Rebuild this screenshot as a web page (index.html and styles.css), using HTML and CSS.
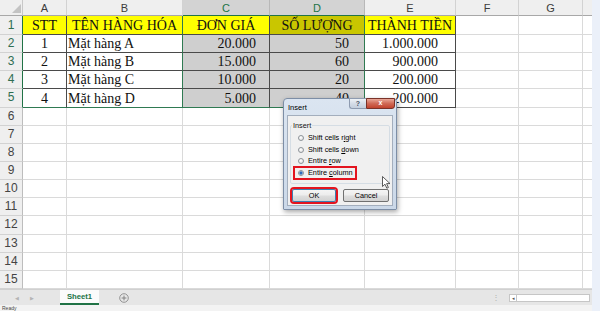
FILE: index.html
```html
<!DOCTYPE html>
<html lang="vi">
<head>
<meta charset="utf-8">
<title>Insert</title>
<link rel="stylesheet" href="styles.css">
</head>
<body>
<div class="app">
  <div class="main">
    <div class="sheet">
      <div class="c corner"><svg width="10" height="10" viewBox="0 0 10 10"><polygon points="10,1 10,10 1,10" fill="#c3c3c3"/></svg></div>
      <div class="c ch">A</div>
      <div class="c ch">B</div>
      <div class="c ch on">C</div>
      <div class="c ch on">D</div>
      <div class="c ch">E</div>
      <div class="c ch">F</div>
      <div class="c ch">G</div>
      <div class="c ch hx"></div>

      <div class="c rh on">1</div>
      <div class="c t y ctr">STT</div>
      <div class="c t y ctr gr">TÊN HÀNG HÓA</div>
      <div class="c t y ctr">ĐƠN GIÁ</div>
      <div class="c t yo ctr gr">SỐ LƯỢNG</div>
      <div class="c t y ctr">THÀNH TIỀN</div>
      <div class="c"></div><div class="c"></div><div class="c hx"></div>

      <div class="c rh on">2</div>
      <div class="c t ctr">1</div>
      <div class="c t l gr">Mặt hàng A</div>
      <div class="c t g r pc">20.000</div>
      <div class="c t g r pd gr">50</div>
      <div class="c t r pe">1.000.000</div>
      <div class="c"></div><div class="c"></div><div class="c hx"></div>

      <div class="c rh on">3</div>
      <div class="c t ctr">2</div>
      <div class="c t l gr">Mặt hàng B</div>
      <div class="c t g r pc">15.000</div>
      <div class="c t g r pd gr">60</div>
      <div class="c t r pe">900.000</div>
      <div class="c"></div><div class="c"></div><div class="c hx"></div>

      <div class="c rh on">4</div>
      <div class="c t ctr">3</div>
      <div class="c t l gr">Mặt hàng C</div>
      <div class="c t g r pc">10.000</div>
      <div class="c t g r pd gr">20</div>
      <div class="c t r pe">200.000</div>
      <div class="c"></div><div class="c"></div><div class="c hx"></div>

      <div class="c rh on">5</div>
      <div class="c t ctr gb">4</div>
      <div class="c t l gr gb">Mặt hàng D</div>
      <div class="c t g r pc gb">5.000</div>
      <div class="c t g r pd gr gb">40</div>
      <div class="c t r pe">200.000</div>
      <div class="c"></div><div class="c"></div><div class="c hx"></div>

      <div class="c rh">6</div><div class="c"></div><div class="c"></div><div class="c"></div><div class="c"></div><div class="c"></div><div class="c"></div><div class="c"></div><div class="c hx"></div>
      <div class="c rh">7</div><div class="c"></div><div class="c"></div><div class="c"></div><div class="c"></div><div class="c"></div><div class="c"></div><div class="c"></div><div class="c hx"></div>
      <div class="c rh">8</div><div class="c"></div><div class="c"></div><div class="c"></div><div class="c"></div><div class="c"></div><div class="c"></div><div class="c"></div><div class="c hx"></div>
      <div class="c rh">9</div><div class="c"></div><div class="c"></div><div class="c"></div><div class="c"></div><div class="c"></div><div class="c"></div><div class="c"></div><div class="c hx"></div>
      <div class="c rh">10</div><div class="c"></div><div class="c"></div><div class="c"></div><div class="c"></div><div class="c"></div><div class="c"></div><div class="c"></div><div class="c hx"></div>
      <div class="c rh">11</div><div class="c"></div><div class="c"></div><div class="c"></div><div class="c"></div><div class="c"></div><div class="c"></div><div class="c"></div><div class="c hx"></div>
      <div class="c rh">12</div><div class="c"></div><div class="c"></div><div class="c"></div><div class="c"></div><div class="c"></div><div class="c"></div><div class="c"></div><div class="c hx"></div>
      <div class="c rh">13</div><div class="c"></div><div class="c"></div><div class="c"></div><div class="c"></div><div class="c"></div><div class="c"></div><div class="c"></div><div class="c hx"></div>
      <div class="c rh">14</div><div class="c"></div><div class="c"></div><div class="c"></div><div class="c"></div><div class="c"></div><div class="c"></div><div class="c"></div><div class="c hx"></div>
      <div class="c rh">15</div><div class="c"></div><div class="c"></div><div class="c"></div><div class="c"></div><div class="c"></div><div class="c"></div><div class="c"></div><div class="c hx"></div>
    </div>

    <div class="tabbar">
      <div class="nav"><span class="arr">&#9664;</span><span class="arr">&#9654;</span></div>
      <div class="tab">Sheet1</div>
      <div class="add"><svg width="10" height="10" viewBox="0 0 10 10"><circle cx="5" cy="5" r="4.3" fill="none" stroke="#8a8a8a" stroke-width="0.9"/><path d="M5 2.6V7.4M2.6 5H7.4" stroke="#7a7a7a" stroke-width="0.9"/></svg></div>
      <div class="spacer"></div>
      <div class="split">&#8942;</div>
      <div class="hscroll"><span class="sbtn">&#9666;</span><span class="track"></span></div>
    </div>
    <div class="status">Ready</div>
  </div>
  <div class="strip"></div>

  <div class="dlg">
    <div class="dlg-title">
      <span class="ttl">Insert</span>
      <div class="tbtns"><span class="help">?</span><span class="close">x</span></div>
    </div>
    <div class="dlg-body">
      <fieldset class="grp">
        <legend>Insert</legend>
        <div class="opt"><span class="lab"><span class="radio"></span><span class="txt">Shift cells r<u>i</u>ght</span></span></div>
        <div class="opt"><span class="lab"><span class="radio"></span><span class="txt">Shift cells <u>d</u>own</span></span></div>
        <div class="opt"><span class="lab"><span class="radio"></span><span class="txt">Entire <u>r</u>ow</span></span></div>
        <div class="opt"><span class="lab hl"><span class="radio on"></span><span class="txt">Entire <u>c</u>olumn</span></span></div>
      </fieldset>
      <div class="btns">
        <button class="btn ok">OK</button>
        <button class="btn cancel">Cancel</button>
      </div>
    </div>
  </div>

  <svg class="cursor" width="9" height="13" viewBox="0 0 9 13"><path d="M0.5 0.5V10.5L3 8.2L4.8 12.2L6.4 11.5L4.6 7.6H8Z" fill="#fff" stroke="#333" stroke-width="0.8" stroke-linejoin="round"/></svg>
</div>
</body>
</html>
```

FILE: styles.css
```css
html, body {
  margin: 0;
  padding: 0;
  width: 600px;
  height: 311px;
  overflow: hidden;
  background: #fff;
}

.app {
  position: relative;
  display: flex;
  width: 600px;
  height: 311px;
}

.main {
  width: 592px;
  display: flex;
  flex-direction: column;
}

.strip {
  width: 8px;
  background: #ebf0f9;
}

.sheet {
  display: grid;
  grid-template-columns: 23px 44px 116px 87px 95px 91px 63px 64px 9px;
  grid-template-rows: 16px 19px repeat(14, 18.143px);
  height: 289px;
  overflow: hidden;
}

.c {
  box-sizing: border-box;
  border-right: 1px solid #dadada;
  border-bottom: 1px solid #dadada;
  display: flex;
  align-items: flex-end;
  overflow: hidden;
  white-space: nowrap;
  font-family: "Liberation Serif", "Times New Roman", serif;
  font-size: 14px;
  line-height: 16px;
  color: #111;
  background: #fff;
}

.hx {
  border-right: none;
}

.corner {
  background: #efefef;
  border-right: 1px solid #c8c8c8;
  border-bottom: 1px solid #a8a8a8;
  align-items: flex-end;
  justify-content: flex-end;
  padding: 0 1px 2px 0;
}

.ch {
  background: #efefef;
  border-bottom: 1px solid #a8a8a8;
  border-right-color: #d2d2d2;
  justify-content: center;
  align-items: center;
  font-family: "Liberation Sans", Arial, sans-serif;
  font-size: 11px;
  line-height: 12px;
  color: #3c3c3c;
}

.ch.on {
  background: #d3d3d3;
  color: #217346;
  border-bottom: 1px solid #217346;
  border-right-color: #b8b8b8;
}

.rh {
  background: #efefef;
  border-right: 1px solid #bdbdbd;
  border-bottom-color: #d2d2d2;
  justify-content: center;
  align-items: center;
  font-family: "Liberation Sans", Arial, sans-serif;
  font-size: 12px;
  line-height: 13px;
  color: #444;
}

.rh.on {
  color: #2e6e52;
  border-right-color: #217346;
}

.t {
  border-right-color: #4a4a4a;
  border-bottom-color: #4a4a4a;
}

.y { background: #ffff00; }
.yo { background: #c9c600; }
.g { background: #cfcfcf; }

.ctr { justify-content: center; }
.l { justify-content: flex-start; padding-left: 1px; }
.r { justify-content: flex-end; }
.pc { padding-right: 13px; }
.pd { padding-right: 15px; }
.pe { padding-right: 17px; }

.gr { border-right-color: #2f7a52; }
.gb { border-bottom-color: #2f7a52; }

/* sheet tabs */
.tabbar {
  box-sizing: border-box;
  height: 16px;
  background: #e6e6e6;
  border-top: 1px solid #d0d0d0;
  display: flex;
  align-items: flex-start;
  font-family: "Liberation Sans", Arial, sans-serif;
}

.nav {
  width: 60px;
  display: flex;
  align-items: center;
  height: 15px;
  padding-left: 15px;
  box-sizing: border-box;
  gap: 11px;
}

.arr {
  font-size: 5px;
  color: #b4b4b4;
  line-height: 6px;
}

.tab {
  box-sizing: border-box;
  width: 39px;
  height: 15px;
  background: #fbfbfb;
  border-bottom: 2px solid #217346;
  color: #217346;
  font-weight: bold;
  font-size: 7.7px;
  line-height: 13px;
  text-align: center;
}

.add {
  margin-left: 20px;
  height: 15px;
  display: flex;
  align-items: center;
}

.spacer { flex: 1; }

.split {
  font-size: 8px;
  color: #b0b0b0;
  line-height: 15px;
  margin-right: 9px;
}

.hscroll {
  display: flex;
  align-items: center;
  height: 15px;
  margin-right: 2px;
}

.sbtn {
  box-sizing: border-box;
  width: 8px;
  height: 8px;
  border: 1px solid #c6c6c6;
  background: #fff;
  font-size: 5px;
  line-height: 6px;
  color: #555;
  text-align: center;
}

.track {
  box-sizing: border-box;
  width: 73px;
  height: 8px;
  border: 1px solid #c6c6c6;
  border-left: none;
  background: #fff;
}

.status {
  height: 6px;
  background: #f3f3f3;
  overflow: hidden;
  font-family: "Liberation Sans", Arial, sans-serif;
  font-size: 5px;
  line-height: 6px;
  padding-left: 2px;
  box-sizing: border-box;
  color: #444;
}

/* dialog */
.dlg {
  position: absolute;
  left: 283px;
  top: 98px;
  width: 114px;
  height: 112px;
  box-sizing: border-box;
  border: 1px solid #7d8ea6;
  border-radius: 4px 4px 1px 1px;
  background: linear-gradient(#dbe5f1, #cbd8e8);
  box-shadow: 1px 2px 5px rgba(0, 0, 0, 0.35);
  padding: 0 3px 3px;
  display: flex;
  flex-direction: column;
  font-family: "Liberation Sans", Arial, sans-serif;
  color: #111;
}

.dlg-title {
  height: 16px;
  display: flex;
  align-items: flex-start;
}

.ttl {
  flex: 1;
  font-size: 7.5px;
  line-height: 8px;
  padding: 5px 0 0 1px;
  color: #000;
}

.tbtns {
  display: flex;
  margin-top: -1px;
  margin-right: -2px;
  height: 11px;
}

.help {
  box-sizing: border-box;
  width: 17px;
  height: 11px;
  border: 1px solid #8e9bb0;
  border-right: none;
  border-radius: 0 0 0 3px;
  background: linear-gradient(#eef2f7, #d3dbe6 55%, #c4cfdd);
  font-size: 7px;
  font-weight: bold;
  line-height: 9px;
  text-align: center;
  color: #4a5566;
}

.close {
  box-sizing: border-box;
  width: 29px;
  height: 11px;
  border: 1px solid #7a3228;
  border-radius: 0 0 3px 0;
  background: linear-gradient(#e9a797, #d06a56 50%, #c2432d);
  font-size: 7px;
  font-weight: bold;
  line-height: 8px;
  text-align: center;
  color: #fff;
}

.dlg-body {
  flex: 1;
  background: #f0f0f0;
  border: 1px solid #a3aebd;
  padding: 5px 2px 3px;
  font-size: 7.3px;
}

.grp {
  margin: 0;
  padding: 2px 0 4px 0;
  border: 1px solid #d5dde4;
  border-radius: 2px;
  min-width: 0;
}

.grp legend {
  padding: 0 1px;
  margin-left: 1px;
  line-height: 9px;
  font-size: 7.3px;
  color: #111;
}

.opt {
  height: 11.7px;
  display: flex;
  align-items: center;
  padding-left: 4px;
}

.lab {
  display: inline-flex;
  align-items: center;
  height: 10px;
  padding: 0 2px 0 3px;
  gap: 4px;
  line-height: 10px;
  color: #000;
}

.txt {
  white-space: nowrap;
}

.txt u {
  text-decoration-thickness: 0.6px;
  text-underline-offset: 1px;
}

.lab.hl {
  outline: 2px solid #e3141f;
}

.radio {
  box-sizing: border-box;
  width: 6px;
  height: 6px;
  border-radius: 50%;
  border: 1px solid #8d9399;
  background: radial-gradient(circle at 40% 35%, #ffffff, #dcdcdc);
}

.radio.on {
  background: radial-gradient(circle, #1f5fb0 0, #3b78c4 1.4px, #e8eef6 1.9px);
}

.btns {
  display: flex;
  gap: 7px;
  margin-top: 5px;
  padding-left: 2px;
}

.btn {
  box-sizing: border-box;
  width: 44px;
  height: 13px;
  padding: 0;
  border: 1px solid #707070;
  border-radius: 2px;
  background: linear-gradient(#f4f4f4, #ececec 48%, #dedede 52%, #d2d2d2);
  font-family: "Liberation Sans", Arial, sans-serif;
  font-size: 7.3px;
  line-height: 11px;
  color: #000;
}

.btn.ok {
  border-color: #3c7fb1;
  outline: 2px solid #e3141f;
}

.btn.cancel {
  width: 46px;
}

.cursor {
  position: absolute;
  left: 382px;
  top: 176px;
}
```
